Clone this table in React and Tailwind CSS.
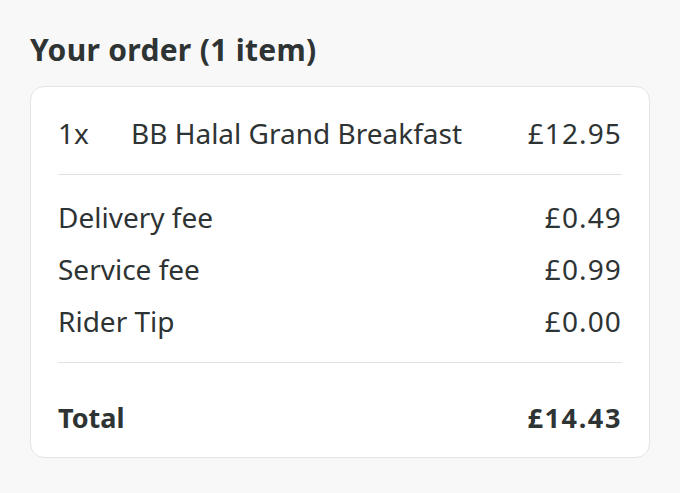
import React from 'react';

const fees = [
  { label: 'Delivery fee', amount: '£0.49' },
  { label: 'Service fee', amount: '£0.99' },
  { label: 'Rider Tip', amount: '£0.00' },
];

export default function App() {
  return (
    <div
      className="w-[680px] h-[493px] bg-[#f8f8f8] px-[30px] pt-[30px] text-[#2e3333]"
      style={{ fontFamily: '"Noto Sans", "Open Sans", sans-serif' }}
    >
      <h2 className="text-[30px] font-bold leading-[40px] tracking-[0.01em]">Your order (1 item)</h2>

      <div className="mt-[16px] w-[620px] bg-white border border-[#e4e4e4] rounded-[14px] px-[27px] pt-[27px] pb-[19px]">
        {/* item */}
        <div className="h-[38px] flex items-center text-[28px]">
          <span className="w-[73px]">1x</span>
          <span className="flex-1">BB Halal Grand Breakfast</span>
          <span className="tracking-[0.04em]">£12.95</span>
        </div>

        <div className="mt-[22px] h-px bg-[#e2e2e2]" />

        {/* fees */}
        <div className="mt-[16px]">
          {fees.map((f) => (
            <div key={f.label} className="h-[52px] flex items-center justify-between text-[28px]">
              <span>{f.label}</span>
              <span className="tracking-[0.04em]">{f.amount}</span>
            </div>
          ))}
        </div>

        <div className="mt-[15px] h-px bg-[#e2e2e2]" />

        {/* total */}
        <div className="mt-[35px] h-[40px] flex items-center justify-between text-[27px] font-bold">
          <span>Total</span>
          <span className="tracking-[0.06em]">£14.43</span>
        </div>
      </div>
    </div>
  );
}
